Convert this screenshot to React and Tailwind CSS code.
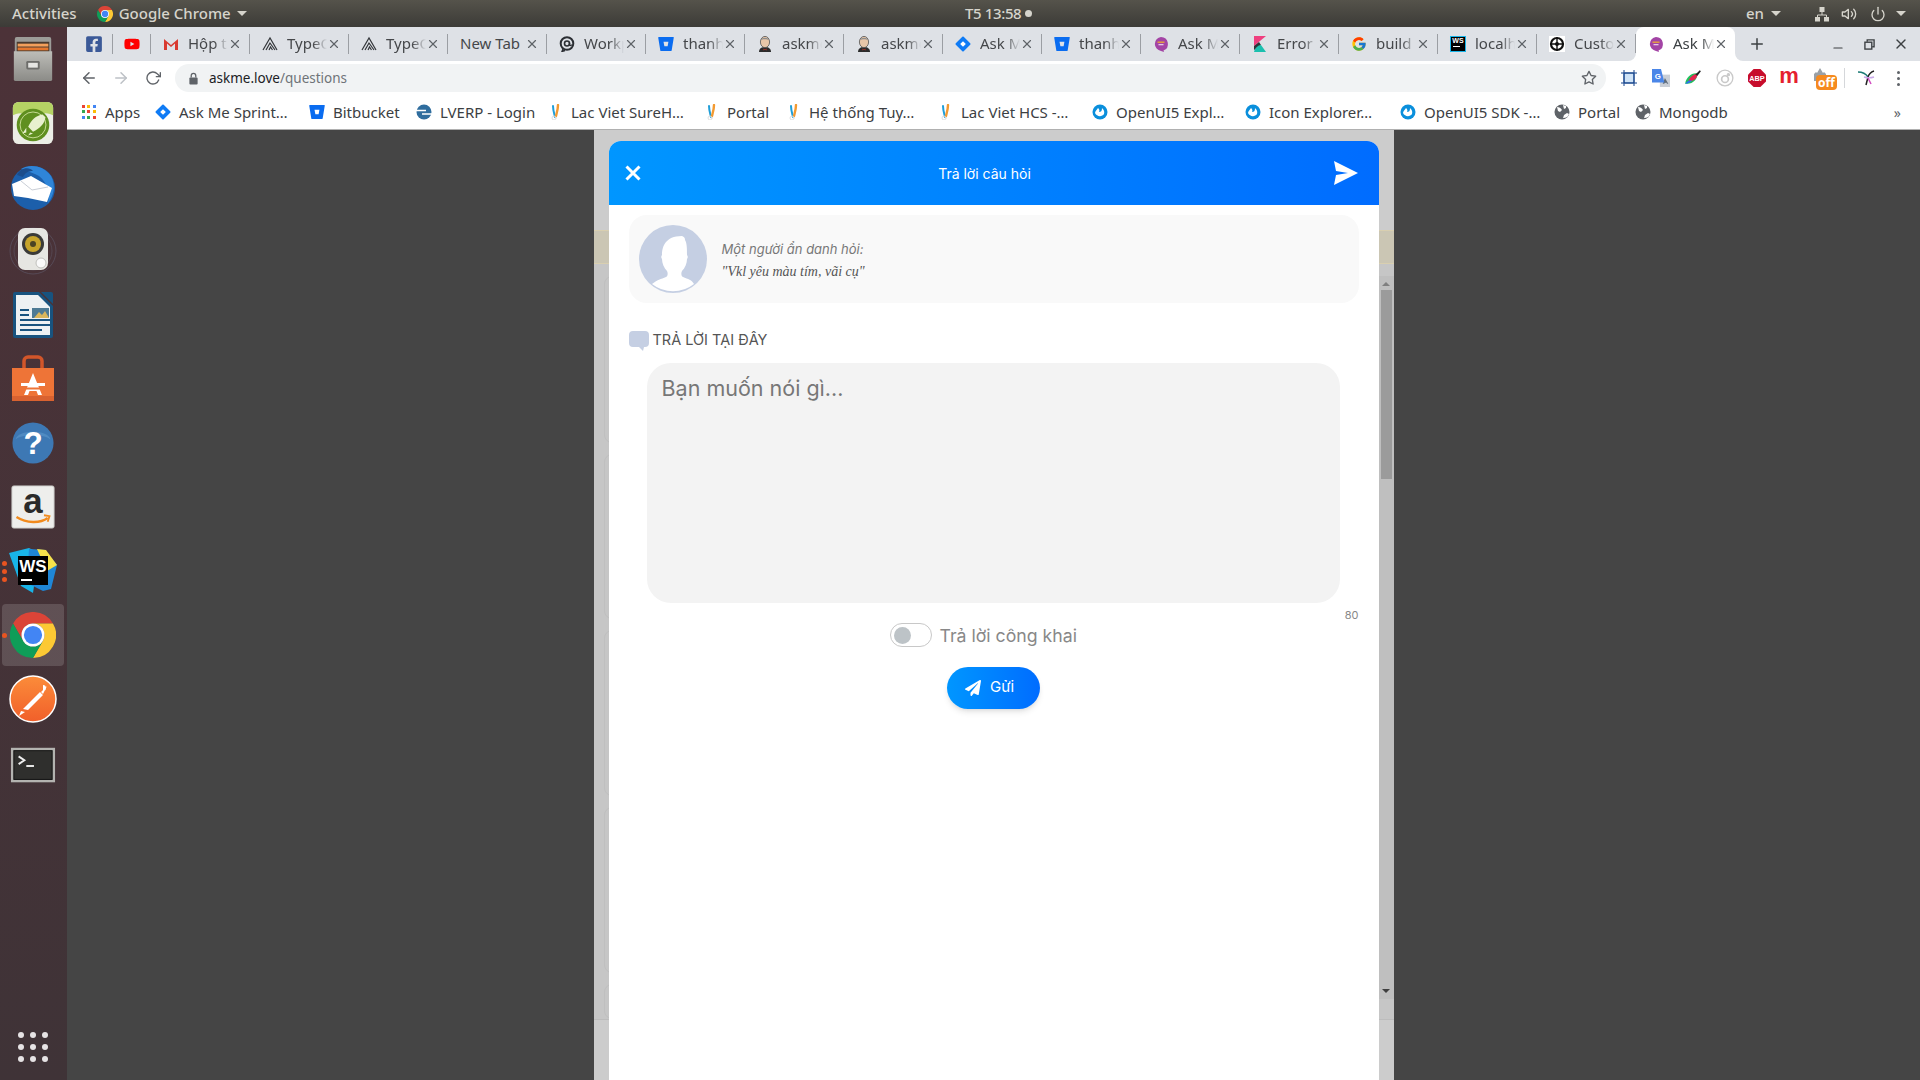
import React from 'react';
import { FaFacebookSquare, FaYoutube, FaBitbucket, FaPaperPlane } from 'react-icons/fa';
import { FcGoogle } from 'react-icons/fc';
import { FiArrowLeft, FiArrowRight, FiRotateCw, FiStar, FiX, FiPlus, FiMinus, FiPower, FiVolume2 } from 'react-icons/fi';

// small favicons
const Gmail = () => (
    <svg viewBox="0 0 16 16" className="w-4 h-4">
        <path d="M1 14V3l7 6 7-6v11h-3V7.5L8 11 4 7.5V14z" fill="#d93a30" />
    </svg>
);
const TypeMark = () => (
    <svg viewBox="0 0 16 16" className="w-4 h-4" fill="none" stroke="#33363a" strokeWidth="1.2">
        <path d="M1 14L8 2l7 12" />
        <path d="M4 14l4-7 5 7" />
        <path d="M7 14l1.5-3 2 3" />
    </svg>
);
const WorkIcon = () => (
    <svg viewBox="0 0 16 16" className="w-4 h-4" fill="none" stroke="#2b2e33">
        <circle cx="8" cy="7.5" r="6.3" strokeWidth="2" />
        <circle cx="8" cy="7.5" r="2.5" strokeWidth="1.6" />
        <path d="M10.5 7v1.5c0 1.5 2 1.5 2 0M4 13l-1 2.5 3-1" strokeWidth="1.4" />
    </svg>
);
const Jenkins = () => (
    <svg viewBox="0 0 16 16" className="w-4 h-4">
        <path d="M2 16c0-3 2-5 6-5s6 2 6 5z" fill="#2b2b2b" />
        <ellipse cx="8" cy="6" rx="4.6" ry="5.6" fill="#e8c6a8" stroke="#555" strokeWidth=".8" />
        <path d="M4 4c1-3 7-3 8 0-2-1-6-1-8 0z" fill="#8d8d8d" />
        <path d="M6.5 12.5l1.5 1 1.5-1v2l-1.5-1-1.5 1z" fill="#c0392b" />
    </svg>
);
const JiraDiamond = () => (
    <svg viewBox="0 0 16 16" className="w-4 h-4">
        <rect x="2.4" y="2.4" width="11.2" height="11.2" transform="rotate(45 8 8)" rx="1" fill="#0f7bf5" />
        <rect x="6" y="6" width="4" height="4" transform="rotate(45 8 8)" fill="#fff" />
    </svg>
);
const Bit = () => <FaBitbucket className="w-4 h-4 text-[#0a6cf0]" />;
const AskMe = () => (
    <svg viewBox="0 0 16 16" className="w-4 h-4">
        <path d="M8 1a7 7 0 0 1 2.5 13.5L11 16l-3-1.100A7 7 0 0 1 8 1z" fill="#a344a5" />
        <rect x="4.500" y="5.500" width="7" height="1.400" fill="#e8a33a" />
        <rect x="5.500" y="8" width="5" height="1.300" fill="#e7c7e8" />
    </svg>
);
const Kibana = () => (
    <svg viewBox="0 0 16 16" className="w-4 h-4">
        <path d="M2 0h12L2 10z" fill="#ef3f7f" />
        <path d="M2 10l5-4 2 3-7 5z" fill="#2f3338" />
        <path d="M2 16c1-4 4-7 7-7l5 7z" fill="#1bbfae" />
    </svg>
);
const WsTab = () => (
    <div className="w-4 h-4 bg-black border border-[#18b4e8] flex flex-col items-center justify-start overflow-hidden">
        <span className="text-[7px] leading-[8px] font-bold text-white font-['Liberation_Sans',sans-serif]">WS</span>
        <span className="w-[7px] h-px bg-white self-start ml-[2px] mt-[1px]" />
    </div>
);
const Custom = () => (
    <svg viewBox="0 0 16 16" className="w-4 h-4">
        <rect width="16" height="16" fill="#fff" />
        <circle cx="8" cy="8" r="6" fill="none" stroke="#111" strokeWidth="2.200" />
        <circle cx="8" cy="8" r="2" fill="#111" />
        <path d="M8 1v14M1 8h14" stroke="#111" strokeWidth="1.400" />
    </svg>
);

const tabs = [
    { icon: <Gmail />, title: 'Hộp thư đến' },
    { icon: <TypeMark />, title: 'TypeORM' },
    { icon: <TypeMark />, title: 'TypeORM' },
    { title: 'New Tab' },
    { icon: <WorkIcon />, title: 'Workplace' },
    { icon: <Bit />, title: 'thanhdx' },
    { icon: <Jenkins />, title: 'askme' },
    { icon: <Jenkins />, title: 'askme' },
    { icon: <JiraDiamond />, title: 'Ask Me' },
    { icon: <Bit />, title: 'thanhdx' },
    { icon: <AskMe />, title: 'Ask Me' },
    { icon: <Kibana />, title: 'Error' },
    { icon: <FcGoogle className="w-4 h-4" />, title: 'build' },
    { icon: <WsTab />, title: 'localhost' },
    { icon: <Custom />, title: 'Custom' },
];

function Tab({ icon, title, active }) {
    if (active) {
        return (
            <div className="relative w-[99px] h-full bg-white rounded-t-lg flex items-center pl-[12px] pr-[7px]">
                <span className="absolute -left-2 bottom-0 w-2 h-2 bg-white"><span className="block w-2 h-2 bg-[#dee1e6] rounded-br-lg" /></span>
                <span className="absolute -right-2 bottom-0 w-2 h-2 bg-white"><span className="block w-2 h-2 bg-[#dee1e6] rounded-bl-lg" /></span>
                <span className="w-4 h-4 shrink-0">{icon}</span>
                <span className="ml-[9px] -mt-px flex-1 overflow-hidden whitespace-nowrap text-[15px] text-[#3c4043] [mask-image:linear-gradient(to_right,black_70%,transparent)]">{title}</span>
                <FiX className="w-[14px] h-[14px] text-[#5f6368] shrink-0" />
            </div>
        );
    }
    return (
        <>
            <div className="w-[98px] h-full flex items-center pl-[12px] pr-[7px]">
                {icon ? <span className="w-4 h-4 shrink-0 mr-[9px]">{icon}</span> : null}
                <span className={`flex-1 -mt-px overflow-hidden whitespace-nowrap text-[15px] text-[#45474a] ${icon ? "[mask-image:linear-gradient(to_right,black_65%,transparent)]" : ""}`}>{title}</span>
                <FiX className="w-[14px] h-[14px] text-[#5f6368] shrink-0" />
            </div>
            <span className="w-px h-5 bg-[#9b9ea3] shrink-0" />
        </>
    );
}

// bookmark icons
const AppsGrid = () => (
    <div className="grid grid-cols-3 gap-[2px] w-[14px] h-[14px]">
        {['#ea4335', '#fbbc05', '#4285f4', '#34a853', '#ea4335', '#fbbc05', '#4285f4', '#34a853', '#ea4335'].map((c, i) => (
            <span key={i} className="w-[3px] h-[3px]" style={{ background: c }} />
        ))}
    </div>
);
const Sure = () => (
    <svg viewBox="0 0 16 16" className="w-4 h-4" fill="none" strokeLinecap="round">
        <path d="M6 2c0 4 1 7 2 11" stroke="#1f9ed8" strokeWidth="2" />
        <path d="M11 1c0 4-1 7-2 11" stroke="#f39a31" strokeWidth="2.400" />
        <circle cx="7" cy="14" r="2" stroke="#dedede" />
    </svg>
);
const Sap = () => (
    <svg viewBox="0 0 16 16" className="w-4 h-4">
        <circle cx="8" cy="8" r="7.500" fill="#0a8fdc" />
        <path d="M3 9c2 4 7 4 9 1 1-3-1-5-2-6 0 3-1 4-3 4 1-2 0-3-1-4-1 2-3 3-3 5z" fill="#fff" />
    </svg>
);
const Globe = () => (
    <svg viewBox="0 0 16 16" className="w-4 h-4">
        <circle cx="8" cy="8" r="7.500" fill="#5f6368" />
        <path d="M3 3c2 0 4 1 5 3L6 8l-2-1zM9 14l1-3 3-2 2 1c-1 3-3 4-6 4zM9 1l3 1v2l-2 1z" fill="#fff" />
    </svg>
);
const LverpIcon = () => (
    <svg viewBox="0 0 16 16" className="w-4 h-4">
        <circle cx="8" cy="8" r="7.500" fill="#2f6d9e" />
        <path d="M0 6.500h10M6 10h10" stroke="#fff" strokeWidth="1.500" />
    </svg>
);

const bookmarks = [
    { w: 'w-[74px]', icon: <AppsGrid />, label: 'Apps' },
    { w: 'w-[154px]', icon: <JiraDiamond />, label: 'Ask Me Sprint…' },
    { w: 'w-[107px]', icon: <Bit />, label: 'Bitbucket' },
    { w: 'w-[131px]', icon: <LverpIcon />, label: 'LVERP - Login' },
    { w: 'w-[156px]', icon: <Sure />, label: 'Lac Viet SureH…' },
    { w: 'w-[82px]', icon: <Sure />, label: 'Portal' },
    { w: 'w-[152px]', icon: <Sure />, label: 'Hệ thống Tuy…' },
    { w: 'w-[155px]', icon: <Sure />, label: 'Lac Viet HCS -…' },
    { w: 'w-[153px]', icon: <Sap />, label: 'OpenUI5 Expl…' },
    { w: 'w-[155px]', icon: <Sap />, label: 'Icon Explorer…' },
    { w: 'w-[154px]', icon: <Sap />, label: 'OpenUI5 SDK -…' },
    { w: 'w-[81px]', icon: <Globe />, label: 'Portal' },
    { w: 'w-[110px]', icon: <Globe />, label: 'Mongodb' },
];

// toolbar extensions
const extensions = [
    <svg key="a" viewBox="0 0 16 16" className="w-4 h-4">
        <rect x="3" y="3" width="10" height="10" fill="#cfe3f7" stroke="#12418a" strokeWidth="1.500" />
        <path d="M3 0v16M13 0v16M0 3h16M0 13h16" stroke="#12418a" strokeWidth="1" strokeDasharray="2.500 11" />
    </svg>,
    <svg key="b" viewBox="0 0 16 16" className="w-[18px] h-[18px]">
        <rect x="7" y="5" width="9" height="11" fill="#c9ced6" />
        <path d="M11.500 8l-2 5h1l2-1 1 1h1z" fill="#5f6c7a" />
        <path d="M0 0h8l3 12H0z" fill="#4a86e8" />
        <text x="2.500" y="9" fontSize="7" fontWeight="700" fill="#fff" fontFamily="Liberation Sans, sans-serif">G</text>
    </svg>,
    <svg key="c" viewBox="0 0 16 16" className="w-[18px] h-[18px]">
        <path d="M1 13C2 7 7 3 12 4c0 5-4 10-11 9z" fill="#21c15c" />
        <path d="M4 11c1-4 4-6 8-7 0 4-3 7-8 7z" fill="#e6244f" />
        <path d="M1 13c2-2 3-3 6-3-1 2-3 3-6 3z" fill="#2d6ff0" />
        <path d="M10 5l4-4 1 1-3 4z" fill="#222" />
    </svg>,
    <svg key="d" viewBox="0 0 16 16" className="w-[18px] h-[18px]" fill="none" stroke="#c9c9c9">
        <circle cx="8" cy="8" r="7" strokeWidth="1.200" />
        <circle cx="8" cy="9" r="3" strokeWidth="1.500" />
        <circle cx="11" cy="5" r="1" fill="#c9c9c9" />
    </svg>,
    <svg key="e" viewBox="0 0 16 16" className="w-[18px] h-[18px]">
        <path d="M5 0h6l5 5v6l-5 5H5l-5-5V5z" fill="#c70d2c" />
        <text x="8" y="10.500" textAnchor="middle" fontSize="6.500" fontWeight="700" fill="#fff" fontFamily="Liberation Sans, sans-serif">ABP</text>
    </svg>,
    <span key="f" className="text-[22px] leading-none font-extrabold text-[#e5202e] font-['Liberation_Sans',sans-serif] -mt-[4px]">m</span>,
];

// dock icons, everything sits in a 48 box
const ChromeLogo = ({ className }) => (
    <svg viewBox="0 0 48 48" className={className}>
        <path d="M3.200 12A24 24 0 0 1 44.800 12L24 12A12 12 0 0 0 13.610 30z" fill="#db4437" />
        <path d="M44.800 12A24 24 0 0 1 24 48L34.390 30A12 12 0 0 0 24 12z" fill="#fcc934" />
        <path d="M24 48A24 24 0 0 1 3.200 12L13.610 30A12 12 0 0 0 34.390 30z" fill="#0f9d58" />
        <circle cx="24" cy="24" r="12" fill="#fff" />
        <circle cx="24" cy="24" r="9.500" fill="#4285f4" />
    </svg>
);
const DockFiles = () => (
    <svg viewBox="0 0 48 48" className="w-[46px] h-[46px]">
        <defs><linearGradient id="fg" x1="0" y1="0" x2="0" y2="1"><stop offset="0" stopColor="#bdbdb8" /><stop offset="1" stopColor="#8b8b87" /></linearGradient></defs>
        <path d="M5 3a2 2 0 0 1 2-2h34a2 2 0 0 1 2 2v14H5z" fill="#9c9c98" />
        <rect x="7" y="6" width="34" height="11" fill="#4a3a2e" />
        <rect x="8" y="8" width="32" height="3" fill="#f3a05c" />
        <rect x="8" y="12" width="32" height="3" fill="#e5772e" />
        <path d="M4 16h40v29a2 2 0 0 1-2 2H6a2 2 0 0 1-2-2z" fill="url(#fg)" />
        <rect x="17" y="26" width="14" height="9" rx="1.500" fill="#6d6d6a" />
        <rect x="19" y="28" width="10" height="5" fill="#e5e5e2" />
    </svg>
);
const DockRocket = () => (
    <svg viewBox="0 0 48 48" className="w-[46px] h-[46px]">
        <rect x="3" y="2" width="42" height="44" rx="6" fill="#eceee6" />
        <path d="M3 16V8a6 6 0 0 1 6-6h30a6 6 0 0 1 6 6v8c-6-4-36-4-42 0z" fill="#b5d364" />
        <circle cx="24" cy="26" r="17" fill="#5f8f1f" />
        <circle cx="24" cy="26" r="13.500" fill="none" stroke="#c9dd96" strokeWidth="1" />
        <path d="M34 15c-7 1-12 6-15 13l5 5c7-3 12-8 13-15zM17 29l-4 6 4-1zM21 34l-2 3 5-2z" fill="#e8f0cf" />
    </svg>
);
const DockThunderbird = () => (
    <svg viewBox="0 0 48 48" className="w-[48px] h-[48px]">
        <circle cx="24" cy="25" r="22" fill="#1c5fab" />
        <path d="M12 6c8-5 22-4 30 7 5 9 3 20-3 27 2-9 0-20-9-27-5-3-12-5-18-7z" fill="#2f85d8" />
        <path d="M8 12c3-7 12-9 16-4-5 0-8 2-10 6z" fill="#1b4d8c" />
        <path d="M3 21l19-8 21 12-5 14-19-4-14-2z" fill="#fff" />
        <path d="M12 18l11 9 16-3" fill="none" stroke="#c9ced6" strokeWidth="1" />
    </svg>
);
const DockSpeaker = () => (
    <svg viewBox="0 0 48 48" className="w-[48px] h-[48px]">
        <circle cx="24" cy="24" r="23" fill="none" stroke="#5f5a6a" strokeWidth="1" opacity=".6" />
        <circle cx="24" cy="24" r="19" fill="none" stroke="#5f5a6a" strokeWidth="1" opacity=".5" />
        <rect x="9" y="1" width="30" height="42" rx="7" fill="#e6e6e2" />
        <circle cx="24" cy="17" r="11" fill="#3a3a38" />
        <circle cx="24" cy="17" r="8" fill="#c7a42b" />
        <circle cx="24" cy="17" r="3" fill="#4a4324" />
        <circle cx="32" cy="36" r="5" fill="#fafafa" stroke="#c0c0bc" />
    </svg>
);
const DockWriter = () => (
    <svg viewBox="0 0 48 48" className="w-[48px] h-[48px]">
        <path d="M4 3a2 2 0 0 1 2-2h24l14 14v30a2 2 0 0 1-2 2H6a2 2 0 0 1-2-2z" fill="#18537f" />
        <path d="M32 1h10a2 2 0 0 1 2 2v10z" fill="#18537f" />
        <path d="M7 4h22l12 12v28H7z" fill="#edf1f3" />
        <path d="M11 19h9M11 24h9M11 29h30M11 34h30M11 39h22" stroke="#18537f" strokeWidth="2" />
        <rect x="23" y="17" width="17" height="10" fill="#4d7a94" />
        <path d="M25 27l5-6 3 3 3-4 4 7z" fill="#d9b65c" />
    </svg>
);
const DockBag = () => (
    <svg viewBox="0 0 48 48" className="w-[48px] h-[48px] -mt-[3px]">
        <path d="M15 14V7a4 4 0 0 1 4-4h10a4 4 0 0 1 4 4v7" fill="none" stroke="#d2562a" strokeWidth="3.500" />
        <path d="M3 14h42v33H3z" fill="#ee7437" />
        <path d="M3 42h42v5H3z" fill="#d96230" />
        <path d="M24 19l-9 22h4l1.500-4h7l1.500 4h4z" fill="#fff" />
        <rect x="12" y="29" width="24" height="3" fill="#fff" />
        <rect x="16" y="33.500" width="16" height="2" fill="#ee7437" />
    </svg>
);
const DockHelp = () => (
    <svg viewBox="0 0 48 48" className="w-[42px] h-[42px]">
        <circle cx="24" cy="24" r="23.500" fill="#3d78b4" />
        <path d="M4 20C6 8 42 8 44 20 36 13 12 13 4 20z" fill="#5e97cc" opacity=".6" />
        <text x="24" y="36" textAnchor="middle" fontSize="36" fontWeight="700" fill="#fff" fontFamily="Liberation Sans, sans-serif">?</text>
    </svg>
);
const DockAmazon = () => (
    <svg viewBox="0 0 48 48" className="w-[44px] h-[44px]">
        <rect x="1" y="1" width="46" height="46" rx="2" fill="#eeeeec" stroke="#c9c9c6" />
        <text x="24" y="31" textAnchor="middle" fontSize="38" fontWeight="700" fill="#2a2a2a" fontFamily="Liberation Sans, sans-serif">a</text>
        <path d="M6 35c11 7 26 7 34 1" fill="none" stroke="#f18a1d" strokeWidth="2.500" />
        <path d="M36 33l6 1-2 6" fill="none" stroke="#f18a1d" strokeWidth="2" />
    </svg>
);
const DockWs = () => (
    <svg viewBox="0 0 48 48" className="w-[48px] h-[48px]">
        <path d="M0 6l20-5 10 5-6 40-12-7z" fill="#18b4e8" />
        <path d="M20 2l16 1 12 15-6 24-8 2-16-8z" fill="#1f86d6" />
        <path d="M28 2l9 1 11 15-10 6z" fill="#f6e24b" />
        <rect x="9" y="9" width="30" height="29" fill="#000" />
        <text x="24" y="25" textAnchor="middle" fontSize="17" fontWeight="700" fill="#fff" fontFamily="Liberation Sans, sans-serif">WS</text>
        <rect x="12" y="32" width="11" height="2" fill="#fff" />
    </svg>
);
const DockPostman = () => (
    <svg viewBox="0 0 48 48" className="w-[48px] h-[48px]">
        <defs><linearGradient id="pg" x1="0" y1="0" x2="0" y2="1"><stop offset="0" stopColor="#fb8c3a" /><stop offset="1" stopColor="#f15f2a" /></linearGradient></defs>
        <circle cx="24" cy="24" r="23" fill="url(#pg)" stroke="#fff" strokeWidth="1.500" />
        <path d="M38 11l-4 8-2-2zM34 10a3 3 0 1 1 0 6zM31 17l3 3-15 15-5-1zM12 36l4 1-6 4z" fill="#fff" />
    </svg>
);
const DockTerminal = () => (
    <svg viewBox="0 0 48 48" className="w-[46px] h-[46px] mt-[5px]">
        <rect x="1" y="5" width="46" height="36" fill="#b3b3b0" />
        <rect x="4" y="8" width="40" height="30" fill="#2f2f2d" stroke="#0e0e0e" />
        <path d="M9 14l6 4-6 4" fill="none" stroke="#eee" strokeWidth="2" />
        <rect x="17" y="23" width="8" height="2" fill="#eee" />
    </svg>
);

const dock = [
    { el: <DockFiles /> }, { el: <DockRocket /> }, { el: <DockThunderbird /> }, { el: <DockSpeaker /> },
    { el: <DockWriter /> }, { el: <DockBag /> }, { el: <DockHelp /> }, { el: <DockAmazon /> },
    { el: <DockWs />, dots: 3 }, { el: <ChromeLogo className="w-[46px] h-[46px]" />, dots: 1, active: true },
    { el: <DockPostman /> }, { el: <DockTerminal /> },
];

function Dock() {
    return (
        <div className="w-[67px] shrink-0 flex flex-col bg-gradient-to-b from-[#4c3238] to-[#3f3337]">
            {dock.map((d, i) => (
                <div key={i} className="relative h-[64px] flex items-center justify-center pr-[2px]">
                    {d.active && <span className="absolute left-[2px] right-[3px] top-[1px] bottom-[1px] rounded bg-white/15" />}
                    <span className="relative">{d.el}</span>
                    {d.dots ? (
                        <span className="absolute left-[2px] top-0 bottom-0 flex flex-col justify-center gap-[3px]">
                            {Array.from({ length: d.dots }).map((_, k) => (
                                <span key={k} className="w-[5px] h-[5px] rounded-full bg-[#e95420]" />
                            ))}
                        </span>
                    ) : null}
                </div>
            ))}
            <div className="mt-auto mb-[18px] ml-[18px] grid grid-cols-3 gap-x-[6px] gap-y-[6px] self-start">
                {Array.from({ length: 9 }).map((_, i) => (
                    <span key={i} className="w-[6px] h-[6px] rounded-full bg-[#e6e3e4]" />
                ))}
            </div>
        </div>
    );
}

function TopBar() {
    return (
        <div className="h-[27px] shrink-0 flex items-center bg-gradient-to-b from-[#55534b] to-[#3c3b37] text-[15px] font-medium text-[#d6d4cc]">
            <div className="w-[965px] flex items-center pl-[12px]">
                <span>Activities</span>
                <ChromeLogo className="w-4 h-4 ml-[20px]" />
                <span className="ml-[6px]">Google Chrome</span>
                <span className="ml-[6px] w-0 h-0 border-x-[5px] border-x-transparent border-t-[5px] border-t-[#d6d4cc]" />
            </div>
            <span className="tracking-tight">T5 13:58</span>
            <span className="ml-[4px] w-[7px] h-[7px] rounded-full bg-[#d6d4cc]" />
            <div className="ml-auto flex items-center pr-[14px]">
                <span>en</span>
                <span className="ml-[7px] w-0 h-0 border-x-[5px] border-x-transparent border-t-[5px] border-t-[#d6d4cc]" />
                <svg viewBox="0 0 16 16" className="w-4 h-4 ml-[33px] text-[#d6d4cc]" fill="currentColor">
                    <rect x="5.500" y="1" width="5" height="5" />
                    <rect x="1" y="11" width="5" height="4.500" />
                    <rect x="10" y="11" width="5" height="4.500" />
                    <path d="M8 6v3M3.500 11V9h9v2" stroke="currentColor" fill="none" />
                </svg>
                <FiVolume2 className="w-4 h-4 ml-[11px]" />
                <FiPower className="w-4 h-4 ml-[13px]" />
                <span className="ml-[10px] w-0 h-0 border-x-[5px] border-x-transparent border-t-[5px] border-t-[#d6d4cc]" />
            </div>
        </div>
    );
}

function TabStrip() {
    return (
        <div className="h-[34px] shrink-0 flex items-center bg-[#dee1e6] pl-[7px]">
            <div className="w-[38px] h-full flex items-center justify-center pl-[2px]"><FaFacebookSquare className="w-[18px] h-[18px] text-[#3b5998]" /></div>
            <span className="w-px h-5 bg-[#9b9ea3]" />
            <div className="w-[37px] h-full flex items-center justify-center"><FaYoutube className="w-4 h-4 text-[#f00]" /></div>
            <span className="w-px h-5 bg-[#9b9ea3]" />
            {tabs.map((t, i) => <Tab key={i} {...t} />)}
            <Tab icon={<AskMe />} title="Ask Me" active />
            <FiPlus className="w-[18px] h-[18px] ml-[13px] text-[#3c4043]" />
            <FiMinus className="w-[14px] h-[14px] ml-[65px] mt-[8px] text-[#3c4043]" />
            <svg viewBox="0 0 12 12" className="w-[11px] h-[11px] ml-[19px] text-[#3c4043]" fill="none" stroke="currentColor" strokeWidth="1.500">
                <rect x="1" y="3.500" width="7.500" height="7.500" />
                <path d="M3.500 3V1H11v7.500H9" />
            </svg>
            <FiX className="w-4 h-4 ml-[18px] text-[#3c4043]" />
        </div>
    );
}

function Toolbar() {
    return (
        <div className="h-[34px] shrink-0 flex items-center bg-white">
            <FiArrowLeft className="w-[18px] h-[18px] ml-[13px] text-[#5f6368]" />
            <FiArrowRight className="w-[18px] h-[18px] ml-[14px] text-[#bdc1c6]" />
            <FiRotateCw className="w-4 h-4 ml-[15px] text-[#5f6368]" />
            <div className="ml-[14px] w-[1431px] h-[28px] rounded-full bg-[#f1f3f4] flex items-center pl-[13px] pr-[9px]">
                <svg viewBox="0 0 12 14" className="w-[11px] h-[13px] text-[#5f6368]">
                    <path d="M3.500 6V4a2.500 2.500 0 0 1 5 0v2" fill="none" stroke="currentColor" strokeWidth="1.400" />
                    <rect x="1.500" y="6" width="9" height="7.500" rx="1" fill="currentColor" />
                </svg>
                <span className="ml-[10px] text-[13.5px] text-[#202124]">askme.love<span className="text-[#6f7378]">/questions</span></span>
                <FiStar className="ml-auto w-4 h-4 text-[#5f6368]" />
            </div>
            <div className="ml-[7px] flex items-center">
                {extensions.map((ex, i) => (
                    <span key={i} className="w-[32px] flex items-center justify-center">{ex}</span>
                ))}
                <span className="relative w-[36px] h-[24px]">
                    <svg viewBox="0 0 16 16" className="absolute left-[7px] top-[1px] w-4 h-4">
                        <path d="M2 14V7l2-2 1 1 3-5 3 5 1-1 2 2v7z" fill="#9aa0a6" />
                    </svg>
                    <span className="absolute left-[11px] top-[9px] px-[2px] rounded-sm bg-[#f58a1f] text-[12px] leading-[15px] font-bold text-white">off</span>
                </span>
                <span className="ml-[3px] w-px h-5 bg-[#d5d7da]" />
                <svg viewBox="0 0 20 20" className="ml-[11px] w-5 h-5" fill="none" strokeWidth="1.500">
                    <path d="M2 4c5 0 8 2 10 5" stroke="#1b7a75" />
                    <path d="M18 3c-3 1-5 3-6 6l-2 8" stroke="#222" />
                    <path d="M8 9c3 1 7 1 10 0" stroke="#c9a8e8" />
                    <path d="M12 10l3 6" stroke="#d14cc0" />
                </svg>
                <span className="ml-[21px] flex flex-col gap-[3px]">
                    <span className="w-[3px] h-[3px] rounded-full bg-[#5f6368]" />
                    <span className="w-[3px] h-[3px] rounded-full bg-[#5f6368]" />
                    <span className="w-[3px] h-[3px] rounded-full bg-[#5f6368]" />
                </span>
            </div>
        </div>
    );
}

function BookmarkBar() {
    return (
        <div className="h-[35px] shrink-0 flex items-center bg-white border-b border-[#b0b0b0] pl-[14px] text-[15px] text-[#3c4043]">
            {bookmarks.map((b, i) => (
                <div key={i} className={`${b.w} flex items-center gap-2 whitespace-nowrap`}>
                    <span className="w-4 h-4 flex items-center justify-center shrink-0">{b.icon}</span>
                    <span>{b.label}</span>
                </div>
            ))}
            <span className="ml-auto mr-[19px] text-[#5f6368] text-[14px]">»</span>
        </div>
    );
}

// what is left of the page behind the dialog
function PageBehind() {
    const cards = ['h-[168px]', 'h-[165px]', 'h-[167px]', 'h-[167px]', 'h-[35px]'];
    return (
        <div className="w-full h-full flex flex-col bg-[#cccccc]">
            <div className="mt-[100px] h-[34px] shrink-0 bg-[#cbc6b4] border-y border-[#d9cfb0]" />
            <div className="h-[756px] shrink-0 flex bg-[#c6c6c6] border-b border-[#bcbcbc]">
                <div className="flex-1 pt-[12px] pl-[10px] flex flex-col gap-[11px]">
                    {cards.map((h, i) => (
                        <div key={i} className={`${h} w-full border border-[#bfbfbf] rounded-lg`} />
                    ))}
                </div>
                <div className="w-[15px] shrink-0 mt-[12px] h-[723px] bg-[#bfbfbf] flex flex-col items-center">
                    <span className="mt-[6px] w-0 h-0 border-x-[4px] border-x-transparent border-b-[4px] border-b-[#7f7f7f]" />
                    <span className="mt-[4px] w-[11px] h-[189px] bg-[#9b9b9b]" />
                    <span className="mt-auto mb-[6px] w-0 h-0 border-x-[4px] border-x-transparent border-t-[4px] border-t-[#3f3f3f]" />
                </div>
            </div>
        </div>
    );
}

function ReplyDialog() {
    return (
        <div className="absolute left-[15px] top-[11px] bottom-0 w-[770px] rounded-t-xl bg-white flex flex-col font-['Inter',sans-serif]">
            <div className="h-[64px] shrink-0 rounded-t-xl flex items-center justify-between pl-[16px] pr-[20px] bg-gradient-to-r from-[#0096ff] to-[#006cff] text-white">
                <svg viewBox="0 0 16 16" className="w-4 h-4" fill="none" stroke="#fff" strokeWidth="3"><path d="M1.500 1.500l13 13M14.500 1.500l-13 13" /></svg>
                <span className="mr-[6px] text-[14px]">Trả lời câu hỏi</span>
                <svg viewBox="0 0 24 24" className="w-6 h-6" fill="#fff"><path d="M0 0l24 12L0 24l2-10 12-2-12-2z" /></svg>
            </div>

            <div className="mx-[20px] mt-[10px] h-[88px] shrink-0 rounded-[18px] bg-[#f9f9f9] flex items-center pl-[10px]">
                <svg viewBox="0 0 68 68" className="w-[68px] h-[68px] shrink-0">
                    <circle cx="34" cy="34" r="34" fill="#c5cfe3" />
                    <path d="M13 59c5-4 9-5 14-7 2-1 2-4 1-6-3-3-5-8-5-12-1-1-1-3 0-4 0-8 3-19 20-19 3 1 3 3 3 4 2 3 2 9 2 15 1 1 1 3 0 4 0 4-2 9-5 12-1 2-1 5 1 6 5 2 9 3 11 7a34 34 0 0 1-42 0z" fill="#fff" />
                </svg>
                <div className="ml-[15px] mt-[2px] flex flex-col gap-[3px]">
                    <span className="text-[13px] italic leading-[19px] text-[#777]">Một người ẩn danh hỏi:</span>
                    <span className="text-[14px] italic leading-[19px] text-[#555] font-['Liberation_Serif',serif]">"Vkl yêu màu tím, vãi cụ"</span>
                </div>
            </div>

            <div className="mt-[28px] ml-[20px] h-[20px] shrink-0 flex items-center">
                <svg viewBox="0 0 20 20" className="w-5 h-5" fill="#c5cfe3"><path d="M4 0h12a4 4 0 0 1 4 4v8a4 4 0 0 1-4 4h-1l-1 4-4-4H4a4 4 0 0 1-4-4V4a4 4 0 0 1 4-4z" /></svg>
                <span className="ml-[4px] -mt-[2px] text-[14.500px] text-[#555] whitespace-nowrap">TRẢ LỜI TẠI ĐÂY</span>
            </div>

            <textarea
                placeholder="Bạn muốn nói gì..."
                readOnly
                className="mt-[12px] ml-[38px] w-[693px] h-[240px] shrink-0 resize-none rounded-[24px] bg-[#f3f3f3] pl-[15px] pt-[10px] text-[21.500px] leading-[30px] outline-none placeholder:text-[#777]"
            />

            <div className="mt-[6px] mr-[20px] h-[12px] shrink-0 text-right text-[11px] leading-[12px] text-[#888]">80</div>

            <div className="mt-[2px] pl-[281px] h-[24px] shrink-0 flex items-center">
                <span className="w-[42px] h-[24px] rounded-full border border-[#c8c8c8] bg-white flex items-center pl-[3px]">
                    <span className="w-[17px] h-[17px] rounded-full bg-[#bdc3c7]" />
                </span>
                <span className="ml-[8px] mt-[2px] text-[17.700px] text-[#888] whitespace-nowrap">Trả lời công khai</span>
            </div>

            <div className="mt-[20px] shrink-0 flex justify-center">
                <button className="w-[93px] h-[42px] pr-[8px] rounded-full flex items-center justify-center gap-[9px] text-white text-[15px] bg-gradient-to-r from-[#0096ff] to-[#006cff] shadow-md">
                    <FaPaperPlane className="w-4 h-4" />
                    <span className="-mt-[2px]">Gửi</span>
                </button>
            </div>
        </div>
    );
}

export default function App() {
    return (
        <div className="w-screen h-screen overflow-hidden flex flex-col font-['Noto_Sans',sans-serif]">
            <TopBar />
            <div className="flex-1 min-h-0 flex">
                <Dock />
                <div className="flex-1 min-w-0 flex flex-col">
                    <TabStrip />
                    <Toolbar />
                    <BookmarkBar />
                    <div className="flex-1 min-h-0 flex justify-center bg-[#454545]">
                        <div className="relative w-[800px] h-full">
                            <PageBehind />
                            <ReplyDialog />
                        </div>
                    </div>
                </div>
            </div>
        </div>
    );
}
